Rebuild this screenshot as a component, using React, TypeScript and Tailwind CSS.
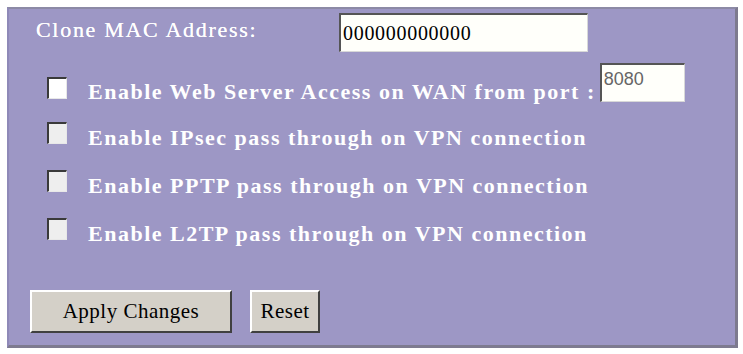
import React from "react";

const serif = { fontFamily: '"Liberation Serif", "Times New Roman", serif' };

function Check({ white, first }: { white?: boolean; first?: boolean }) {
  return (
    <span
      className={`inline-block w-[20px] h-[22px] shrink-0 border-t-2 border-l-2 border-b border-r border-t-[#3a3a3a] border-l-[#3a3a3a] border-b-[#e8e8e8] border-r-[#e8e8e8] ${
        white ? "bg-white" : "bg-[#eeeeee]"
      } ${first ? "mt-[4px]" : "-mt-[2px]"}`}
    />
  );
}

function Row({ label, first, children }: { label: string; first?: boolean; children?: React.ReactNode }) {
  return (
    <div className="h-[48px] flex items-center pl-[38px]">
      <Check white={first} first={first} />
      <span
        className={`ml-[21px] ${first ? "mt-[12px]" : "mt-[7px]"} text-white font-bold text-[22px] tracking-[1.5px] leading-none whitespace-nowrap`}
        style={serif}
      >
        {label}
      </span>
      {children}
    </div>
  );
}

export default function App() {
  return (
    <div className="w-[743px] h-[354px] bg-white p-[7px] pr-[5px]" style={serif}>
      <div className="w-[731px] h-[341px] bg-[#9d97c5] border-t-2 border-t-[#8c8aa6] border-l-2 border-l-[#8f89b8] border-r-[3px] border-r-[#7d7a8e] border-b-[3px] border-b-[#7e7b90] flex flex-col">
        <div className="flex items-center h-[39px] mt-[4px]">
          <span className="ml-[27px] w-[303px] text-white text-[22px] tracking-[1.7px] leading-none -mt-[5px] [text-shadow:0_0_0.4px_white]" style={serif}>
            Clone MAC Address:
          </span>
          <div className="w-[249px] h-[39px] bg-[#fffffa] border-t-2 border-l-2 border-t-[#555] border-l-[#555] border-r border-b border-r-[#d8d8d8] border-b-[#d8d8d8] flex items-center pl-[2px]">
            <span className="text-black text-[20px] tracking-[0.7px] leading-none" style={serif}>000000000000</span>
          </div>
        </div>
        <div className="mt-[10px]">
          <Row label="Enable Web Server Access on WAN from port :" first>
            <div className="ml-[4px] -mt-[7px] w-[85px] h-[39px] bg-[#fffffa] border-t-2 border-l-2 border-t-[#555] border-l-[#555] border-r border-b border-r-[#d8d8d8] border-b-[#d8d8d8] pl-[2px] pt-[3px]">
              <span className="text-[#666] text-[18px] leading-none" style={{ fontFamily: '"Liberation Sans", Arial, sans-serif' }}>8080</span>
            </div>
          </Row>
          <Row label="Enable IPsec pass through on VPN connection" />
          <Row label="Enable PPTP pass through on VPN connection" />
          <Row label="Enable L2TP pass through on VPN connection" />
        </div>
        <div className="flex mt-[36px] ml-[21px] gap-[18px]">
          <button className="w-[202px] h-[43px] bg-[#d4d0c8] border-t-2 border-l-2 border-t-white border-l-white border-r-2 border-b-2 border-r-[#404040] border-b-[#404040] text-black text-[21px] tracking-[0.5px] leading-none" style={serif}>
            Apply Changes
          </button>
          <button className="w-[70px] h-[43px] bg-[#d4d0c8] border-t-2 border-l-2 border-t-white border-l-white border-r-2 border-b-2 border-r-[#404040] border-b-[#404040] text-black text-[21px] tracking-[0.5px] leading-none" style={serif}>
            Reset
          </button>
        </div>
      </div>
    </div>
  );
}
